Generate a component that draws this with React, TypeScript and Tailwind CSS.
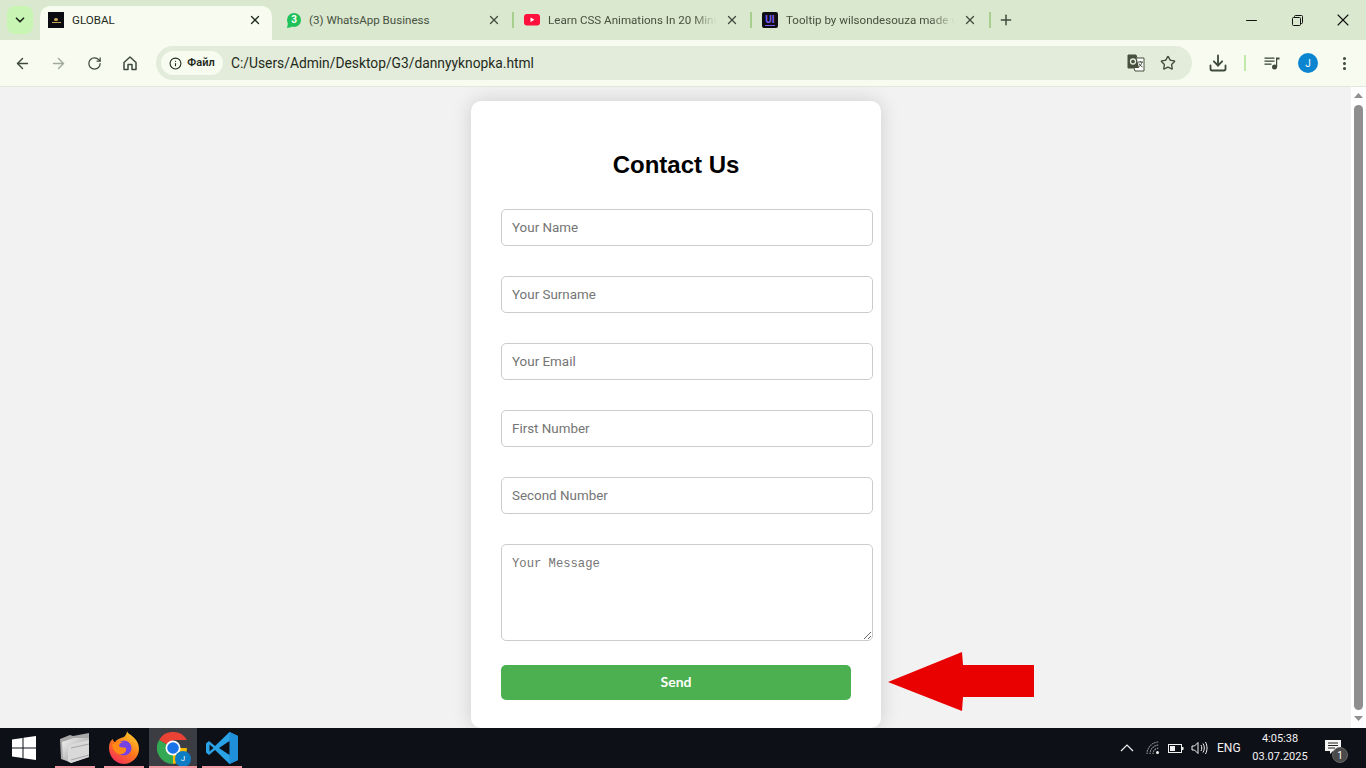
import { ArrowLeft, ArrowRight, RotateCw, Star, Download, EllipsisVertical, X, Plus, ChevronDown, Info, Minus } from 'lucide-react'

const uiFont = "font-['Roboto',sans-serif]"

function HomeIcon() {
  return (
    <svg width="16" height="16" viewBox="0 0 16 16" fill="none" stroke="#3f4a3c" strokeWidth="1.5">
      <path d="M2 7.5 8 2l6 5.500V14.500H10V9.500H6V14.500H2Z" strokeLinejoin="round" />
    </svg>
  )
}

function TranslateIcon() {
  return (
    <svg width="18" height="18" viewBox="0 0 18 18">
      <path d="M1 1h8l1 3h7v13H8l-1-3H1Z" fill="#fff" stroke="#46503f" strokeWidth="1" />
      <path d="M1 1h8l3 13H1Z" fill="#46503f" />
      <circle cx="6" cy="7.500" r="2.500" fill="none" stroke="#e4ebdc" strokeWidth="1.300" />
      <path d="M11 8h5M13.500 7v1M15 8c-.5 2.500-2 4-3.500 5M12 9.500c.7 1.500 2 2.800 3.500 3.500" fill="none" stroke="#46503f" strokeWidth="1" />
    </svg>
  )
}

function MediaIcon() {
  return (
    <svg width="16" height="16" viewBox="0 0 16 16" fill="#3f4a3c">
      <rect x="0.500" y="2.500" width="10" height="1.300" />
      <rect x="0.500" y="5.500" width="10" height="1.300" />
      <rect x="0.500" y="8.500" width="7" height="1.300" />
      <circle cx="10.500" cy="12" r="2.500" />
      <path d="M12 2.500h3.500v2H13.200V12H12Z" />
    </svg>
  )
}

function RestoreIcon() {
  return (
    <svg width="11" height="11" viewBox="0 0 11 11" fill="none" stroke="#111" strokeWidth="1">
      <rect x="0.500" y="2.500" width="8" height="8" rx="1" />
      <path d="M2.500 2.500V1.500a1 1 0 0 1 1-1h6a1 1 0 0 1 1 1v6a1 1 0 0 1-1 1h-1" />
    </svg>
  )
}

function GlobalFavicon() {
  return (
    <div className="w-4 h-4 bg-[#0b0c12] flex flex-col items-center justify-center gap-[1px] shrink-0">
      <div className="w-[4px] h-[3px] rounded-full bg-[#c9a75c]" />
      <div className="w-[9px] h-[1px] bg-[#c9a75c]" />
    </div>
  )
}

function WhatsAppFavicon() {
  return (
    <div className="relative w-[14px] h-[14px] rounded-full bg-[#1fc15b] flex items-center justify-center text-white text-[10px] font-bold leading-none shrink-0">
      3
      <svg width="5" height="5" viewBox="0 0 5 5" className="absolute left-0 bottom-[-1px]"><path d="M0 5 1 0l4 4Z" fill="#1fc15b" /></svg>
    </div>
  )
}

function YouTubeFavicon() {
  return (
    <svg width="16" height="12" viewBox="0 0 16 12" className="shrink-0">
      <rect width="16" height="11.500" rx="3" fill="#ff0f3c" />
      <path d="M6.500 3.500v4.500L10.500 5.750Z" fill="#fff" />
    </svg>
  )
}

function UiFavicon() {
  return (
    <div className="w-4 h-4 rounded-[2px] bg-[#0e0e14] flex flex-col items-center justify-center shrink-0">
      <span className="text-[#7c5cf0] text-[10px] font-bold leading-[10px]">UI</span>
      <div className="w-[10px] h-[1px] bg-[#7c5cf0]" />
    </div>
  )
}

function Tab({ title, icon, active, width, fade, pad }: { title: string; icon: React.ReactNode; active?: boolean; width: string; fade?: boolean; pad: string }) {
  return (
    <div className={`${width} ${pad} h-[34px] pb-[6px] flex items-center gap-2 shrink-0 ${active ? 'bg-[#f7fbf0] rounded-t-[10px]' : ''}`}>
      {icon}
      <span
        className={`flex-1 min-w-0 mt-[1px] overflow-hidden whitespace-nowrap text-[11.600px] ${active ? 'text-[#1f2a1c]' : 'text-[#46503f]'} ${fade ? '[mask-image:linear-gradient(to_right,#000_85%,transparent)]' : ''}`}
      >
        {title}
      </span>
      <X size={14} strokeWidth={2.200} className={active ? 'text-[#1f2a1c]' : 'text-[#3f4a3c]'} />
    </div>
  )
}

function TabDivider() {
  return <div className="w-[2px] h-4 mb-[6px] bg-[#a8d08d] shrink-0" />
}

function TabStrip() {
  return (
    <div className="h-10 bg-[#dae8cf] flex items-end pl-[7px]">
      <div className="w-[26px] h-[28px] mb-[6px] rounded-lg bg-[#c8f5b3] flex items-center justify-center shrink-0">
        <ChevronDown size={14} strokeWidth={3} className="text-[#1f2a1c]" />
      </div>
      <div className="ml-[7px] flex items-center">
        <Tab active width="w-[232px]" pad="pl-2 pr-[10px]" title="GLOBAL" icon={<GlobalFavicon />} />
        <div className="w-[7px]" />
        <Tab width="w-[233px]" pad="pl-2 pr-[11px]" title="(3) WhatsApp Business" icon={<WhatsAppFavicon />} />
        <TabDivider />
        <Tab width="w-[236px]" pad="pl-[10px] pr-[11px]" title="Learn CSS Animations In 20 Minutes" fade icon={<YouTubeFavicon />} />
        <TabDivider />
        <Tab width="w-[237px]" pad="pl-[10px] pr-[12px]" title="Tooltip by wilsondesouza made with CSS" fade icon={<UiFavicon />} />
        <TabDivider />
        <Plus size={16} strokeWidth={2.200} className="ml-[7px] mb-[6px] text-[#3f4a3c]" />
      </div>
      <div className="ml-auto h-10 flex items-center text-[#111]">
        <div className="w-[46px] flex justify-center"><Minus size={17} strokeWidth={1.400} /></div>
        <div className="w-[46px] flex justify-center"><RestoreIcon /></div>
        <div className="w-[46px] flex justify-center"><X size={20} strokeWidth={1.300} /></div>
      </div>
    </div>
  )
}

function Toolbar() {
  return (
    <div className="h-[47px] bg-[#f7fbf0] border-b border-[#e3e6da] flex items-center pl-[14px]">
      <ArrowLeft size={17} strokeWidth={2} className="text-[#3f4a3c]" />
      <ArrowRight size={17} strokeWidth={2} className="ml-[19px] text-[#a3aa9e]" />
      <RotateCw size={15} strokeWidth={2} className="ml-[20px] text-[#3f4a3c]" />
      <div className="ml-[20px]"><HomeIcon /></div>
      <div className="ml-[18px] w-[1036px] h-[34px] rounded-full bg-[#e3ecda] flex items-center pl-[5px] pr-4">
        <div className="h-6 w-[62px] rounded-full bg-[#f7fbf0] flex items-center justify-center gap-[5px]">
          <Info size={13} strokeWidth={2} className="text-[#1f2a1c]" />
          <span className="text-[11px] font-semibold text-[#1f2a1c]">Файл</span>
        </div>
        <span className="ml-2 text-[13.800px] text-[#1f2a1c]">C:/Users/Admin/Desktop/G3/dannyyknopka.html</span>
        <div className="ml-auto flex items-center gap-[15px]">
          <TranslateIcon />
          <Star size={16} strokeWidth={2} className="text-[#3f4a3c]" />
        </div>
      </div>
      <Download size={20} strokeWidth={2.200} className="ml-4 text-[#3f4a3c]" />
      <div className="ml-4 w-[2px] h-4 bg-[#bfeaa8]" />
      <div className="ml-[18px]"><MediaIcon /></div>
      <div className="ml-[18px] w-5 h-5 rounded-full bg-[#0c85d0] text-white text-[10px] flex items-center justify-center">J</div>
      <EllipsisVertical size={17} strokeWidth={2.400} className="ml-[18px] text-[#3f4a3c]" />
    </div>
  )
}

function Field({ placeholder }: { placeholder: string }) {
  return (
    <input
      placeholder={placeholder}
      className="block w-[372px] h-[37px] px-[10px] mb-[30px] pb-[1px] border border-[#ccc] rounded-[5px] bg-white text-[13.400px] font-['Roboto',sans-serif] placeholder:text-[#757575] outline-none"
    />
  )
}

function ContactCard() {
  return (
    <div className="w-[410px] h-[627px] bg-white rounded-[10px] shadow-[0_0_20px_rgba(0,0,0,0.15)] pt-[50px] px-[30px]">
      <h2 className="w-[350px] text-center text-[24px] leading-[27px] font-bold text-black mb-[31px] font-['Liberation_Sans',sans-serif]">
        Contact Us
      </h2>
      <Field placeholder="Your Name" />
      <Field placeholder="Your Surname" />
      <Field placeholder="Your Email" />
      <Field placeholder="First Number" />
      <Field placeholder="Second Number" />
      <textarea
        placeholder="Your Message"
        className="block w-[372px] h-[97px] mb-[24px] px-[10px] py-[10px] border border-[#ccc] rounded-[5px] bg-white text-[12.200px] font-['Liberation_Mono',monospace] placeholder:text-[#757575] outline-none"
      />
      <button className="block w-[350px] h-[35px] pb-[2px] rounded-[5px] bg-[#4caf50] text-white text-[14px] font-bold font-['Lato',sans-serif]">
        Send
      </button>
    </div>
  )
}

function Scrollbar() {
  return (
    <div className="w-[15px] bg-white flex flex-col items-center shrink-0">
      <svg width="9" height="6" viewBox="0 0 9 6" className="mt-[6px]"><path d="M4.500 0 9 5H0Z" fill="#8f8f8f" /></svg>
      <div className="w-[9px] flex-1 my-[6px] rounded-full bg-[#8f8f8f]" />
      <svg width="9" height="6" viewBox="0 0 9 6" className="mb-[6px]"><path d="M4.500 5 9 0H0Z" fill="#8f8f8f" /></svg>
    </div>
  )
}

function RedArrow() {
  return (
    <svg width="148" height="60" viewBox="0 0 148 60" className="absolute left-[887px] top-[565px]">
      <path d="M1 30 75 0 76 13H147V45H76L75 59Z" fill="#e90000" />
    </svg>
  )
}

function FolderIcon() {
  return (
    <svg width="32" height="30" viewBox="0 0 32 30">
      <defs>
        <linearGradient id="fold" x1="0" y1="0" x2="1" y2="1">
          <stop offset="0" stopColor="#f2f2f2" />
          <stop offset="1" stopColor="#8c8c8c" />
        </linearGradient>
      </defs>
      <path d="M1 6 11 2l3 1 16-3v20l-19 9-9-3Z" fill="#a8a8a8" />
      <path d="M3 9l12-4 15 0v19l-18 6-8-4Z" fill="url(#fold)" />
      <path d="M9 12l21-5v17l-18 6-3-2Z" fill="#d9d9d9" />
      <path d="M12 15l18-4M12 27l18-5" stroke="#8e8e8e" strokeWidth="0.700" />
    </svg>
  )
}

function FirefoxIcon() {
  return (
    <svg width="32" height="34" viewBox="0 0 32 34">
      <defs>
        <linearGradient id="ff" x1="0.800" y1="0" x2="0.200" y2="1">
          <stop offset="0" stopColor="#ffd02e" />
          <stop offset="0.500" stopColor="#ff7a1a" />
          <stop offset="1" stopColor="#f2295d" />
        </linearGradient>
      </defs>
      <path d="M1 17C1 12 3 9 5 8c0 2 1 3 2 3 2-3 6-4 9-5 2-2 3-4 3-6 1 3 3 3 5 5 5 4 7 8 7 13 0 8-7 15-15 15S1 26 1 17Z" fill="url(#ff)" />
      <circle cx="16" cy="17" r="7.500" fill="#7542e5" />
      <path d="M4 14c3-3 8-4 12-3-3 0-5 2-5 4 1 2 5 1 7 2 1 4-3 7-7 6-4-1-6-5-7-9Z" fill="#ff8a16" />
    </svg>
  )
}

function ChromeIcon() {
  return (
    <div className="relative w-8 h-8">
      <svg width="32" height="32" viewBox="0 0 32 32">
        <path d="M16 16 2.100 8A16 16 0 0 1 29.900 8H16Z" fill="#ea4335" />
        <path d="M16 16H29.900A16 16 0 0 1 16 32Z" fill="#fbbc04" />
        <path d="M16 16 16 32A16 16 0 0 1 2.100 8Z" fill="#34a853" />
        <circle cx="16" cy="16" r="7.500" fill="#fff" />
        <circle cx="16" cy="16" r="5.800" fill="#1a73e8" />
      </svg>
      <div className="absolute right-[-2px] bottom-[-3px] w-4 h-4 rounded-full bg-[#0c7cc4] text-white text-[8px] flex items-center justify-center">J</div>
    </div>
  )
}

function VsCodeIcon() {
  return (
    <svg width="34" height="34" viewBox="0 0 34 34">
      <path d="M24.500 1 33 5v24l-8.500 4L10 19l-6 5-3-2.500V12.500L4 10l6 5Z" fill="#2aa2e6" />
      <path d="M24.500 1 33 5v24l-8.500 4Z" fill="#1e8fd8" />
      <path d="M24.500 10v14L14 17Z" fill="#0e1018" />
      <path d="M4.500 13.500 8.500 17l-4 3.500Z" fill="#0e1018" />
    </svg>
  )
}

function TaskbarApp({ children, tile, width }: { children: React.ReactNode; tile?: boolean; width: string }) {
  return (
    <div className={`${width} h-10 relative flex items-center justify-center ${tile ? 'bg-[#3c3d42]' : ''}`}>
      {children}
      <div className="absolute bottom-0 inset-x-0 h-[2px] bg-[#f29aa3]" />
    </div>
  )
}

function Tray() {
  return (
    <div className="ml-auto flex items-center h-10 text-[#f2f2f2]">
      <svg width="14" height="8" viewBox="0 0 14 8" fill="none" stroke="#f2f2f2" strokeWidth="1.200"><path d="M1 7 7 1l6 6" /></svg>
      <svg width="14" height="14" viewBox="0 0 14 14" fill="none" stroke="#9a9a9a" strokeWidth="1.100" className="ml-[12px]">
        <path d="M1 13A12 12 0 0 1 13 1M4 13A9 9 0 0 1 13 4M7 13A6 6 0 0 1 13 7" strokeDasharray="1.500 0.800" />
        <circle cx="11.500" cy="11.500" r="1.500" fill="#f2f2f2" stroke="none" />
      </svg>
      <svg width="16" height="9" viewBox="0 0 16 9" className="ml-[8px]" fill="none" stroke="#f2f2f2" strokeWidth="1"><rect x="0.500" y="0.500" width="13" height="8" /><rect x="2" y="2" width="5" height="5" fill="#f2f2f2" stroke="none" /><rect x="14" y="3" width="1.500" height="3" fill="#f2f2f2" stroke="none" /></svg>
      <svg width="17" height="14" viewBox="0 0 17 14" className="ml-[7px]" fill="none" stroke="#f2f2f2" strokeWidth="1"><path d="M1 5h2.500L7 1.500v11L3.500 9H1ZM10 4c1 2 1 4 0 6M12 2.500c1.800 3 1.800 6 0 9M14.500 1c2 4 2 8 0 12" /></svg>
      <span className="ml-[9px] w-[24px] text-[12px] leading-none">ENG</span>
      <div className="ml-[4px] w-[70px] flex flex-col items-center text-[11px] leading-[18px]">
        <span>4:05:38</span>
        <span>03.07.2025</span>
      </div>
      <div className="relative ml-[10px] mr-[23px] w-[18px] h-4">
        <svg width="16" height="15" viewBox="0 0 16 15"><path d="M0 0h16v11H8l-3 3v-3H0Z" fill="#f5f5f5" /><path d="M3 3h10M3 5.500h10M3 8h7" stroke="#222" strokeWidth="1" /></svg>
        <div className="absolute left-[7px] top-[7px] w-4 h-4 rounded-full bg-[#4a4a4a] border border-[#666] text-white text-[10px] flex items-center justify-center">1</div>
      </div>
    </div>
  )
}

function Taskbar() {
  return (
    <div className={`h-10 bg-[#0e1018] flex items-center ${uiFont}`}>
      <svg width="24" height="24" viewBox="0 0 24 24" className="ml-3" fill="#fff">
        <path d="M0 3.500 10.500 2v9.500H0ZM11.500 1.800 24 0v11.500H11.500ZM0 12.500h10.500V22L0 20.500ZM11.500 12.500H24V24l-12.500-1.800Z" />
      </svg>
      <div className="ml-[19px] flex">
        <TaskbarApp width="w-10"><FolderIcon /></TaskbarApp>
        <div className="w-[9px]" />
        <TaskbarApp width="w-10"><FirefoxIcon /></TaskbarApp>
        <div className="w-[5px]" />
        <TaskbarApp tile width="w-12"><ChromeIcon /></TaskbarApp>
        <div className="w-[5px]" />
        <TaskbarApp width="w-10"><VsCodeIcon /></TaskbarApp>
      </div>
      <Tray />
    </div>
  )
}

export default function App() {
  return (
    <div className={`h-[768px] w-[1366px] overflow-hidden flex flex-col bg-[#f2f2f2] ${uiFont}`}>
      <TabStrip />
      <Toolbar />
      <div className="relative flex-1 min-h-0 flex overflow-hidden">
        <main className="flex-1 min-w-0 flex justify-center pt-[14px] pl-[1px]">
          <ContactCard />
        </main>
        <Scrollbar />
        <RedArrow />
      </div>
      <Taskbar />
    </div>
  )
}
